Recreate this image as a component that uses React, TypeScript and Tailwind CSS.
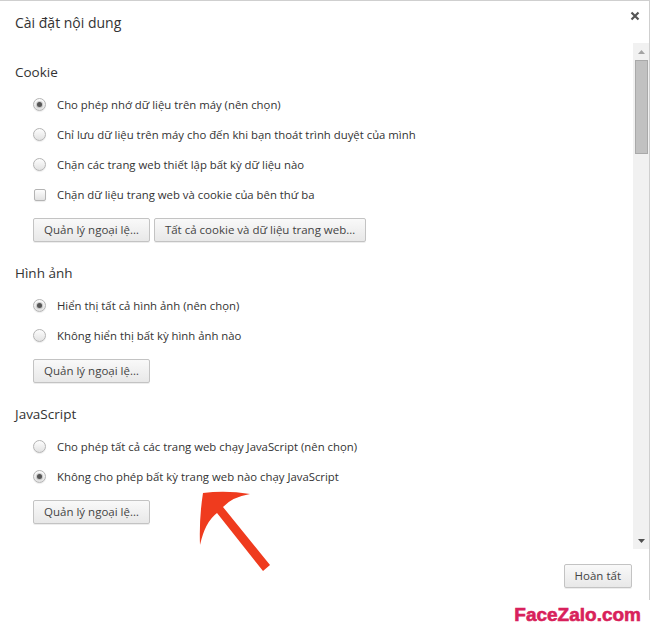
import React from "react";

function Radio({ checked }: { checked?: boolean }) {
  return (
    <span className="flex h-[13px] w-[13px] shrink-0 items-center justify-center rounded-full border border-[#b4b4b4] bg-linear-to-b from-[#fdfdfd] to-[#e2e2e2] shadow-[0_1px_1px_rgba(0,0,0,0.08)]">
      {checked && <span className="h-[5px] w-[5px] rounded-full bg-[#555] shadow-[0_0_1px_1px_rgba(0,0,0,0.18)]" />}
    </span>
  );
}

function Checkbox() {
  return (
    <span className="ml-px h-[12px] w-[12px] shrink-0 rounded-[2px] border border-[#b4b4b4] bg-linear-to-b from-[#fdfdfd] to-[#e2e2e2] shadow-[0_1px_1px_rgba(0,0,0,0.08)]" />
  );
}

function Btn({ children }: { children: React.ReactNode }) {
  return (
    <button className="h-6 rounded-[2px] border border-[#c3c3c3] bg-linear-to-b from-[#f9f9f9] to-[#e8e8e8] px-[10px] text-[11.5px] leading-none text-[#444] shadow-[0_1px_0_rgba(0,0,0,0.07)]">
      {children}
    </button>
  );
}

interface Item {
  label: string;
  checked?: boolean;
  box?: boolean;
}

function Section({ title, items, buttons }: { title: string; items: Item[]; buttons: string[] }) {
  return (
    <div className="mb-[21px]">
      <h3 className="h-5 text-[13.5px] leading-5">{title}</h3>
      <div className="ml-[18px] mt-[7px]">
        {items.map((it) => (
          <div key={it.label} className="flex h-[30px] items-center gap-[11px] pt-px text-[11.35px]">
            {it.box ? <Checkbox /> : <Radio checked={it.checked} />}
            <span>{it.label}</span>
          </div>
        ))}
        <div className="mt-[9px] flex gap-1">
          {buttons.map((b) => (
            <Btn key={b}>{b}</Btn>
          ))}
        </div>
      </div>
    </div>
  );
}

export default function App() {
  return (
    <div className="relative h-[630px] w-[651px] overflow-hidden bg-white font-['Open_Sans',sans-serif] text-[#333]">
      <div className="flex h-[600px] w-[650px] flex-col border-t border-r border-[#cfcfcf]">
        {/* tiêu đề */}
        <div className="flex h-[42px] items-start justify-between pl-[15px] pr-[9px]">
          <h2 className="pt-[11px] text-[14px] leading-[22px]">Cài đặt nội dung</h2>
          <svg width="10" height="10" viewBox="0 0 10 10" className="mt-[10px]">
            <path d="M1.5 1.5 L8.5 8.5 M8.5 1.5 L1.5 8.5" stroke="#555" strokeWidth="2.2" />
          </svg>
        </div>

        <div className="flex h-[506px]">
          <div className="flex-1 overflow-hidden pl-[15px] pt-[19px]">
            <Section
              title="Cookie"
              items={[
                { label: "Cho phép nhớ dữ liệu trên máy (nên chọn)", checked: true },
                { label: "Chỉ lưu dữ liệu trên máy cho đến khi bạn thoát trình duyệt của mình" },
                { label: "Chặn các trang web thiết lập bất kỳ dữ liệu nào" },
                { label: "Chặn dữ liệu trang web và cookie của bên thứ ba", box: true },
              ]}
              buttons={["Quản lý ngoại lệ…", "Tất cả cookie và dữ liệu trang web…"]}
            />
            <Section
              title="Hình ảnh"
              items={[
                { label: "Hiển thị tất cả hình ảnh (nên chọn)", checked: true },
                { label: "Không hiển thị bất kỳ hình ảnh nào" },
              ]}
              buttons={["Quản lý ngoại lệ…"]}
            />
            <Section
              title="JavaScript"
              items={[
                { label: "Cho phép tất cả các trang web chạy JavaScript (nên chọn)" },
                { label: "Không cho phép bất kỳ trang web nào chạy JavaScript", checked: true },
              ]}
              buttons={["Quản lý ngoại lệ…"]}
            />
          </div>

          {/* thanh cuộn */}
          <div className="flex w-[16px] flex-col bg-[#f1f1f1]">
            <div className="flex h-[17px] items-center justify-center">
              <svg width="7" height="4" viewBox="0 0 7 4">
                <path d="M0 4 L3.5 0 L7 4 Z" fill="#a3a3a3" />
              </svg>
            </div>
            <div className="ml-[2px] mr-px h-[94px] border border-[#a9a9a9] bg-[#c1c1c1]" />
            <div className="flex-1" />
            <div className="flex h-[17px] items-center justify-center">
              <svg width="7" height="4" viewBox="0 0 7 4">
                <path d="M0 0 L7 0 L3.5 4 Z" fill="#505050" />
              </svg>
            </div>
          </div>
        </div>

        <div className="flex justify-end pr-[17px] pt-[15px]">
          <Btn>Hoàn tất</Btn>
        </div>
      </div>

      <div className="flex h-[30px] justify-end pr-[10px]">
        <span className="font-['Liberation_Sans',Arial,sans-serif] text-[19px] font-bold leading-[30px] text-[#d8215b] [-webkit-text-stroke:0.6px_#d8215b]">
          FaceZalo.com
        </span>
      </div>

      {/* mũi tên đỏ */}
      <svg className="pointer-events-none absolute left-0 top-0" width="651" height="630" viewBox="0 0 651 630">
        <path
          d="M203 493 Q226 490 250 494 Q232 497 223 507 L270 565 L263 571 L217 513 Q205 522 200 545 Q199 518 203 493 Z"
          fill="#ef3b1e"
        />
      </svg>
    </div>
  );
}
